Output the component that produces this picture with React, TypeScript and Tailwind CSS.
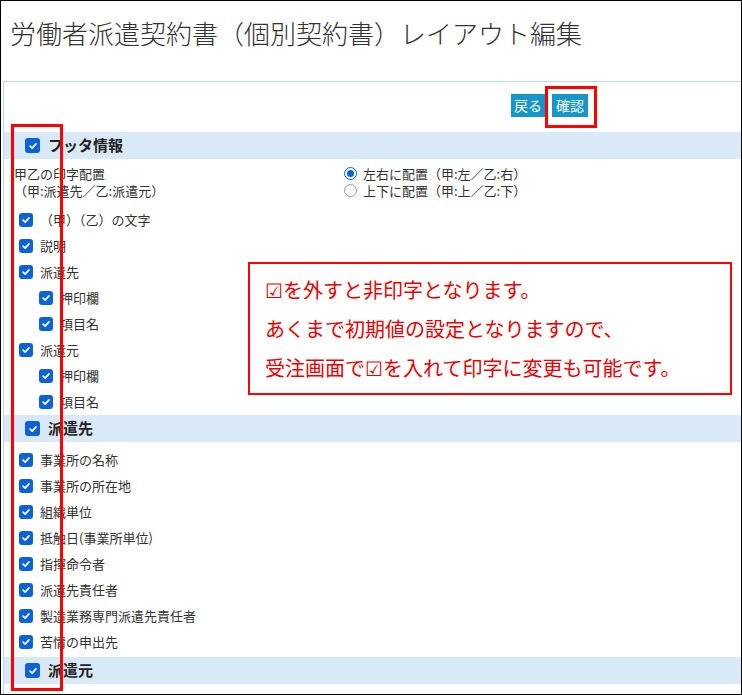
import React from 'react';

const font = { fontFamily: '"Noto Sans CJK JP", "Noto Sans", sans-serif' };

function Check({ size = 'sm' }: { size?: 'sm' | 'lg' }) {
  const s = size === 'lg' ? 'w-[15px] h-[15px]' : 'w-[14px] h-[14px]';
  return (
    <span className={`${s} shrink-0 rounded-[3px] bg-[#0b63d6] flex items-center justify-center`}>
      <svg viewBox="0 0 12 12" className="w-[10px] h-[10px]" fill="none" stroke="white" strokeWidth="2" strokeLinecap="round" strokeLinejoin="round">
        <path d="M2.5 6.2 L5 8.6 L9.6 3.4" />
      </svg>
    </span>
  );
}

function Section({ title }: { title: string }) {
  return (
    <div className="h-[27px] bg-[#dae9f7] flex items-center gap-[8px] pl-[21px]">
      <Check size="lg" />
      <span className="text-[15px] font-bold text-[#222]">{title}</span>
    </div>
  );
}

function Item({ label, indent = false }: { label: string; indent?: boolean }) {
  return (
    <div className={`h-[26px] flex items-center gap-[7px] ${indent ? 'pl-[35px]' : 'pl-[15px]'}`}>
      <Check />
      <span className="text-[13px] text-[#333]">{label}</span>
    </div>
  );
}

export default function App() {
  return (
    <div style={font} className="relative w-[742px] h-[695px] border border-black bg-white overflow-hidden">
      <h1 className="h-[66px] pl-[9px] pt-[13px] text-[26px] font-light text-[#333] leading-[38px] whitespace-nowrap">
        労働者派遣契約書（個別契約書）レイアウト編集
      </h1>
      <div className="ml-[2px] mt-[14px] border-t border-l border-[#bcd6ee] h-full">
        <div className="flex justify-end gap-[7px] pr-[153px] pt-[12px] h-[50px]">
          <span className="h-[23px] px-[3px] bg-[#1797c9] text-white text-[14px] leading-[23px]">戻る</span>
          <span className="h-[23px] px-[4px] bg-[#1797c9] text-white text-[14px] leading-[23px]">確認</span>
        </div>
        <Section title="フッタ情報" />
        <div className="flex pt-[6px] h-[56px] text-[13px] text-[#333]">
          <div className="w-[340px] pl-[10px] leading-[17px]">
            <div>甲乙の印字配置</div>
            <div>（甲:派遣先／乙:派遣元）</div>
          </div>
          <div className="leading-[17px]">
            <div className="flex items-center gap-[6px]">
              <span className="w-[13px] h-[13px] rounded-full border border-[#0b63d6] flex items-center justify-center">
                <span className="w-[7px] h-[7px] rounded-full bg-[#0b63d6]" />
              </span>
              左右に配置（甲:左／乙:右）
            </div>
            <div className="flex items-center gap-[6px]">
              <span className="w-[13px] h-[13px] rounded-full border border-[#999]" />
              上下に配置（甲:上／乙:下）
            </div>
          </div>
        </div>
        <div className="-mt-[8px]">
          <Item label="（甲）（乙）の文字" />
          <Item label="説明" />
          <Item label="派遣先" />
          <Item label="押印欄" indent />
          <Item label="項目名" indent />
          <Item label="派遣元" />
          <Item label="押印欄" indent />
          <Item label="項目名" indent />
        </div>
        <Section title="派遣先" />
        <div className="pt-[5px] pb-[2px]">
          {['事業所の名称', '事業所の所在地', '組織単位', '抵触日(事業所単位)', '指揮命令者', '派遣先責任者', '製造業務専門派遣先責任者', '苦情の申出先'].map(l => (
            <Item key={l} label={l} />
          ))}
        </div>
        <Section title="派遣元" />
      </div>

      {/* annotations */}
      <div className="absolute left-[10px] top-[123px] w-[52px] h-[567px] border-[3px] border-[#f00]" />
      <div className="absolute left-[544px] top-[85px] w-[52px] h-[42px] border-[3px] border-[#f00]" />
      <div className="absolute left-[247px] top-[261px] w-[484px] h-[133px] border-2 border-[#f00] bg-white pl-[15px] pt-[6px] text-[20px] leading-[39px] text-[#e60000] whitespace-nowrap">
        <div>☑を外すと非印字となります。</div>
        <div>あくまで初期値の設定となりますので、</div>
        <div>受注画面で☑を入れて印字に変更も可能です。</div>
      </div>
    </div>
  );
}
